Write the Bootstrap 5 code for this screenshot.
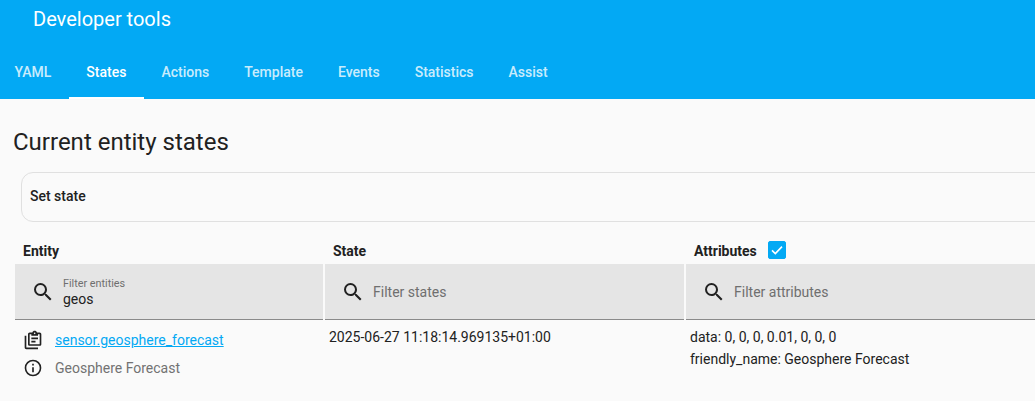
<!doctype html>
<html lang="en">
<head>
<meta charset="utf-8">
<title>Developer tools</title>
<link rel="stylesheet" href="https://cdn.jsdelivr.net/npm/bootstrap@5.3.0/dist/css/bootstrap.min.css">
<style>
html, body { height: 401px; overflow: hidden; }
body { font-family: Roboto, "Liberation Sans", sans-serif; background: #fafafa; color: #212121; font-size: 14px; }
.ha-header { background: #03a9f4; height: 99px; color: #fff; }
.ha-title { font-size: 20px; line-height: 24px; padding: 7px 0 0 33px; height: 48px; font-weight: 400; margin: 0; }
.ha-tabs { height: 51px; flex-wrap: nowrap; }
.ha-tabs .nav-link { color: rgba(255,255,255,.8); font-size: 14px; font-weight: 500; height: 51px; padding: 14px 17.5px 0; line-height: 20px; border-radius: 0; }
.ha-tabs .nav-link:first-child { padding-left: 14.5px; padding-right: 17.5px; }
.ha-tabs .nav-link.active { color: #fff; border-bottom: 2px solid #fff; }
.ha-main { padding: 27px 0 0 0; width: 1300px; }
.ha-heading { font-size: 24px; line-height: 32px; font-weight: 400; margin: 0 0 14px 13px; color: #212121; }
.ha-setstate { margin-left: 21px; height: 50px; border: 1px solid #e0e0e0; border-radius: 12px; font-weight: 500; padding: 0 0 2px 8px; line-height: 20px; background: transparent; }
.ha-cols { display: grid; grid-template-columns: 310px 361px 1fr; margin-left: 15px; }
.ha-colhead { height: 42px; font-weight: 700; padding-left: 8px; gap: 11px; }
.ha-colhead span { line-height: 20px; padding-top: 19px; }
.ha-colhead .form-check-input { width: 18px; height: 18px; margin: 19px 0 0; border-radius: 2px; background-color: #03a9f4; border-color: #03a9f4; background-image: url("data:image/svg+xml,%3csvg xmlns='http://www.w3.org/2000/svg' viewBox='0 0 24 24'%3e%3cpath fill='none' stroke='%23fff' stroke-width='2.4' d='M4.5 12.5l5 5L19.5 7'/%3e%3c/svg%3e"); }
.ha-filter { height: 56px; background: #e5e5e5; border-bottom: 1px solid #8a8a8a; margin-right: 2px; padding-left: 16px; gap: 8px; }
.ha-filter svg { width: 24px; height: 24px; flex: none; }
.ha-filter-body { min-width: 0; flex: 1; }
.ha-filter-body.ha-labelled { padding: 4px 0 0; }
.ha-filter label { display: block; font-size: 10.8px; line-height: 12px; color: #6f6f6f; margin-bottom: -1px; }
.ha-filter input { border: 0; background: transparent; padding: 0; outline: 0; font-size: 14px; line-height: 20px; color: #212121; width: 100%; display: block; }
.ha-filter input::placeholder { color: #6f6f6f; opacity: 1; }
.ha-cell-state, .ha-cell-attrs { line-height: 22px; padding-top: 6px; padding-left: 4px; }
.ha-cell-entity { padding: 6px 0 0 8px; }
.ha-entity-row { height: 28px; gap: 12px; }
.ha-entity-row svg { width: 20px; height: 20px; flex: none; fill: #212121; }
.ha-entity-row a { color: #03a9f4; }
.ha-name { color: #727272; }
</style>
</head>
<body>
<header class="ha-header">
  <h1 class="ha-title">Developer tools</h1>
  <nav class="nav ha-tabs">
    <a class="nav-link" href="#">YAML</a>
    <a class="nav-link active" href="#">States</a>
    <a class="nav-link" href="#">Actions</a>
    <a class="nav-link" href="#">Template</a>
    <a class="nav-link" href="#">Events</a>
    <a class="nav-link" href="#">Statistics</a>
    <a class="nav-link" href="#">Assist</a>
  </nav>
</header>
<main class="ha-main">
  <h2 class="ha-heading">Current entity states</h2>
  <div class="ha-setstate d-flex align-items-center">Set state</div>
  <div class="ha-cols">
    <div class="ha-colhead d-flex"><span>Entity</span></div>
    <div class="ha-colhead d-flex"><span>State</span></div>
    <div class="ha-colhead d-flex"><span>Attributes</span><input class="form-check-input" type="checkbox" checked aria-label="Attributes"></div>

    <div class="ha-filter d-flex align-items-center">
      <svg viewBox="0 0 24 24" fill="#212121"><path d="M9.5,3A6.5,6.5 0 0,1 16,9.5C16,11.11 15.41,12.59 14.44,13.73L14.71,14H15.5L20.5,19L19,20.5L14,15.5V14.71L13.73,14.44C12.59,15.41 11.11,16 9.5,16A6.5,6.5 0 0,1 3,9.5A6.5,6.5 0 0,1 9.5,3M9.5,5C7,5 5,7 5,9.5C5,12 7,14 9.5,14C12,14 14,12 14,9.5C14,7 12,5 9.5,5Z"/></svg>
      <div class="ha-filter-body ha-labelled"><label for="f1">Filter entities</label><input id="f1" value="geos"></div>
    </div>
    <div class="ha-filter d-flex align-items-center">
      <svg viewBox="0 0 24 24" fill="#212121"><path d="M9.5,3A6.5,6.5 0 0,1 16,9.5C16,11.11 15.41,12.59 14.44,13.73L14.71,14H15.5L20.5,19L19,20.5L14,15.5V14.71L13.73,14.44C12.59,15.41 11.11,16 9.5,16A6.5,6.5 0 0,1 3,9.5A6.5,6.5 0 0,1 9.5,3M9.5,5C7,5 5,7 5,9.5C5,12 7,14 9.5,14C12,14 14,12 14,9.5C14,7 12,5 9.5,5Z"/></svg>
      <div class="ha-filter-body"><input placeholder="Filter states" aria-label="Filter states"></div>
    </div>
    <div class="ha-filter d-flex align-items-center">
      <svg viewBox="0 0 24 24" fill="#212121"><path d="M9.5,3A6.5,6.5 0 0,1 16,9.5C16,11.11 15.41,12.59 14.44,13.73L14.71,14H15.5L20.5,19L19,20.5L14,15.5V14.71L13.73,14.44C12.59,15.41 11.11,16 9.5,16A6.5,6.5 0 0,1 3,9.5A6.5,6.5 0 0,1 9.5,3M9.5,5C7,5 5,7 5,9.5C5,12 7,14 9.5,14C12,14 14,12 14,9.5C14,7 12,5 9.5,5Z"/></svg>
      <div class="ha-filter-body"><input placeholder="Filter attributes" aria-label="Filter attributes"></div>
    </div>

    <div class="ha-cell-entity">
      <div class="ha-entity-row d-flex align-items-center">
        <svg viewBox="0 0 24 24"><path d="M4 7V21H18V23H4C2.9 23 2 22.1 2 21V7H4M20 3C21.1 3 22 3.9 22 5V17C22 18.1 21.1 19 20 19H8C6.9 19 6 18.1 6 17V5C6 3.9 6.9 3 8 3H11.18C11.6 1.84 12.7 1 14 1C15.3 1 16.4 1.84 16.82 3H20M14 3C13.45 3 13 3.45 13 4C13 4.55 13.45 5 14 5C14.55 5 15 4.55 15 4C15 3.45 14.55 3 14 3M10 7V5H8V17H20V5H18V7H10M15 15H10V13H15V15M18 11H10V9H18V11Z"/></svg>
        <a href="#">sensor.geosphere_forecast</a>
      </div>
      <div class="ha-entity-row d-flex align-items-center">
        <svg viewBox="0 0 24 24"><path d="M11,9H13V7H11M12,20C7.59,20 4,16.41 4,12C4,7.59 7.59,4 12,4C16.41,4 20,7.59 20,12C20,16.41 16.41,20 12,20M12,2A10,10 0 0,0 2,12A10,10 0 0,0 12,22A10,10 0 0,0 22,12A10,10 0 0,0 12,2M11,17H13V11H11V17Z"/></svg>
        <span class="ha-name">Geosphere Forecast</span>
      </div>
    </div>
    <div class="ha-cell-state">2025-06-27 11:18:14.969135+01:00</div>
    <div class="ha-cell-attrs">data: 0, 0, 0, 0.01, 0, 0, 0<br>friendly_name: Geosphere Forecast</div>
  </div>
</main>
<script src="https://cdn.jsdelivr.net/npm/bootstrap@5.3.0/dist/js/bootstrap.bundle.min.js"></script>
</body>
</html>
